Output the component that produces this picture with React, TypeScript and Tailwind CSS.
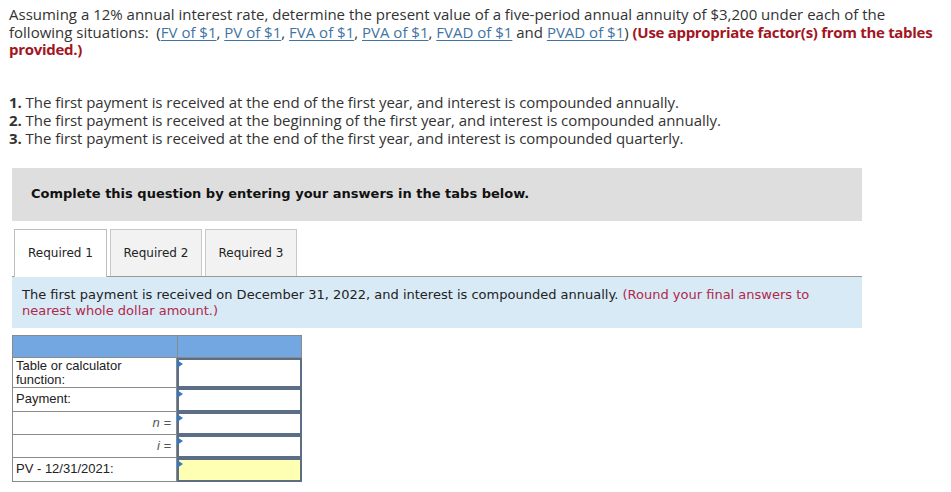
import React from "react";

const Link = ({ children }: { children: React.ReactNode }) => (
  <span className="text-[#3f73a3] underline decoration-[1px] underline-offset-2">{children}</span>
);

const Tri = () => (
  <span className="absolute left-[-2px] top-[0px] w-0 h-0 border-y-[4px] border-y-transparent border-l-[6px] border-l-[#3577c0]" />
);

const InputCell = ({ h, yellow }: { h: string; yellow?: boolean }) => (
  <div className={`relative ${h} border-2 border-[#5b6e86] ${yellow ? "bg-[#ffffb3]" : "bg-white"}`}>
    <Tri />
  </div>
);

export default function App() {
  const proxima = { fontFamily: '"Open Sans", "Liberation Sans", sans-serif' };
  const verdana = { fontFamily: '"DejaVu Sans", Verdana, sans-serif' };
  const arial = { fontFamily: '"Liberation Sans", Arial, sans-serif' };
  return (
    <div className="w-[951px] h-[492px] bg-white overflow-hidden pl-[9px] pt-[6px]">
      <p className="text-[15px] leading-[17.5px] text-[#333] whitespace-nowrap" style={proxima}>
        Assuming a 12% annual interest rate, determine the present value of a five-period annual annuity of $3,200 under each of the
        <br />
        following situations:&nbsp; (<Link>FV of $1</Link>, <Link>PV of $1</Link>, <Link>FVA of $1</Link>, <Link>PVA of $1</Link>,{" "}
        <Link>FVAD of $1</Link> and <Link>PVAD of $1</Link>){" "}
        <span className="font-bold text-[#a3151f] tracking-[-0.3px]">(Use appropriate factor(s) from the tables</span>
        <br />
        <span className="font-bold text-[#a3151f] tracking-[-0.3px]">provided.)</span>
      </p>

      <div className="mt-[34px] text-[15px] leading-[18px] text-[#333] whitespace-nowrap tracking-[-0.05px]" style={proxima}>
        <div><b>1.</b> The first payment is received at the end of the first year, and interest is compounded annually.</div>
        <div><b>2.</b> The first payment is received at the beginning of the first year, and interest is compounded annually.</div>
        <div><b>3.</b> The first payment is received at the end of the first year, and interest is compounded quarterly.</div>
      </div>

      <div className="ml-[3px] w-[850px] mt-[21px]">
        <div className="h-[53px] bg-[#dedede] flex items-center pl-[19px]">
          <span className="text-[13px] font-bold text-[#111]" style={verdana}>
            Complete this question by entering your answers in the tabs below.
          </span>
        </div>

        <div className="mt-[8px] flex items-end gap-[3px] pl-[2px] border-b border-[#9a9a9a] h-[48px]" style={verdana}>
          <div className="w-[93px] h-[48px] -mb-[1px] bg-white border border-b-0 border-[#bdbdbd] flex items-center justify-center text-[12px] text-[#222]">
            Required 1
          </div>
          <div className="w-[92px] h-[47px] bg-[#f2f2f2] border border-b-0 border-[#c8c8c8] flex items-center justify-center text-[12px] text-[#222]">
            Required 2
          </div>
          <div className="w-[92px] h-[47px] bg-[#f2f2f2] border border-b-0 border-[#c8c8c8] flex items-center justify-center text-[12px] text-[#222]">
            Required 3
          </div>
        </div>

        <div className="bg-[#d9eaf7] pl-[10px] pt-[10px] pb-[9px] h-[51px] text-[13px] leading-[16px] text-[#222]" style={verdana}>
          The first payment is received on December 31, 2022, and interest is compounded annually.{" "}
          <span className="text-[#b0284a]">(Round your final answers to nearest whole dollar amount.)</span>
        </div>

        <div className="mt-[7px] w-[290px] grid grid-cols-[165px_125px] text-[13px] text-[#222]" style={arial}>
          <div className="h-[23px] bg-[#72a7e1] border border-[#8a8a8a] border-r-0" />
          <div className="h-[23px] bg-[#72a7e1] border border-[#8a8a8a]" />

          <div className="h-[30px] border-x border-b border-[#8a8a8a] pl-[3px] leading-[14px] pt-[1px]">
            Table or calculator<br />function:
          </div>
          <InputCell h="h-[30px]" />

          <div className="h-[24px] border-x border-b border-[#8a8a8a] pl-[3px] flex items-center">Payment:</div>
          <InputCell h="h-[24px]" />

          <div className="h-[23px] border-x border-b border-[#8a8a8a] pr-[5px] flex items-center justify-end italic text-[#555]">
            n =
          </div>
          <InputCell h="h-[23px]" />

          <div className="h-[23px] border-x border-b border-[#8a8a8a] pr-[5px] flex items-center justify-end italic text-[#555]">
            i =
          </div>
          <InputCell h="h-[23px]" />

          <div className="h-[24px] border-x border-b border-[#8a8a8a] pl-[3px] flex items-center">PV - 12/31/2021:</div>
          <InputCell h="h-[24px]" yellow />
        </div>
      </div>
    </div>
  );
}
